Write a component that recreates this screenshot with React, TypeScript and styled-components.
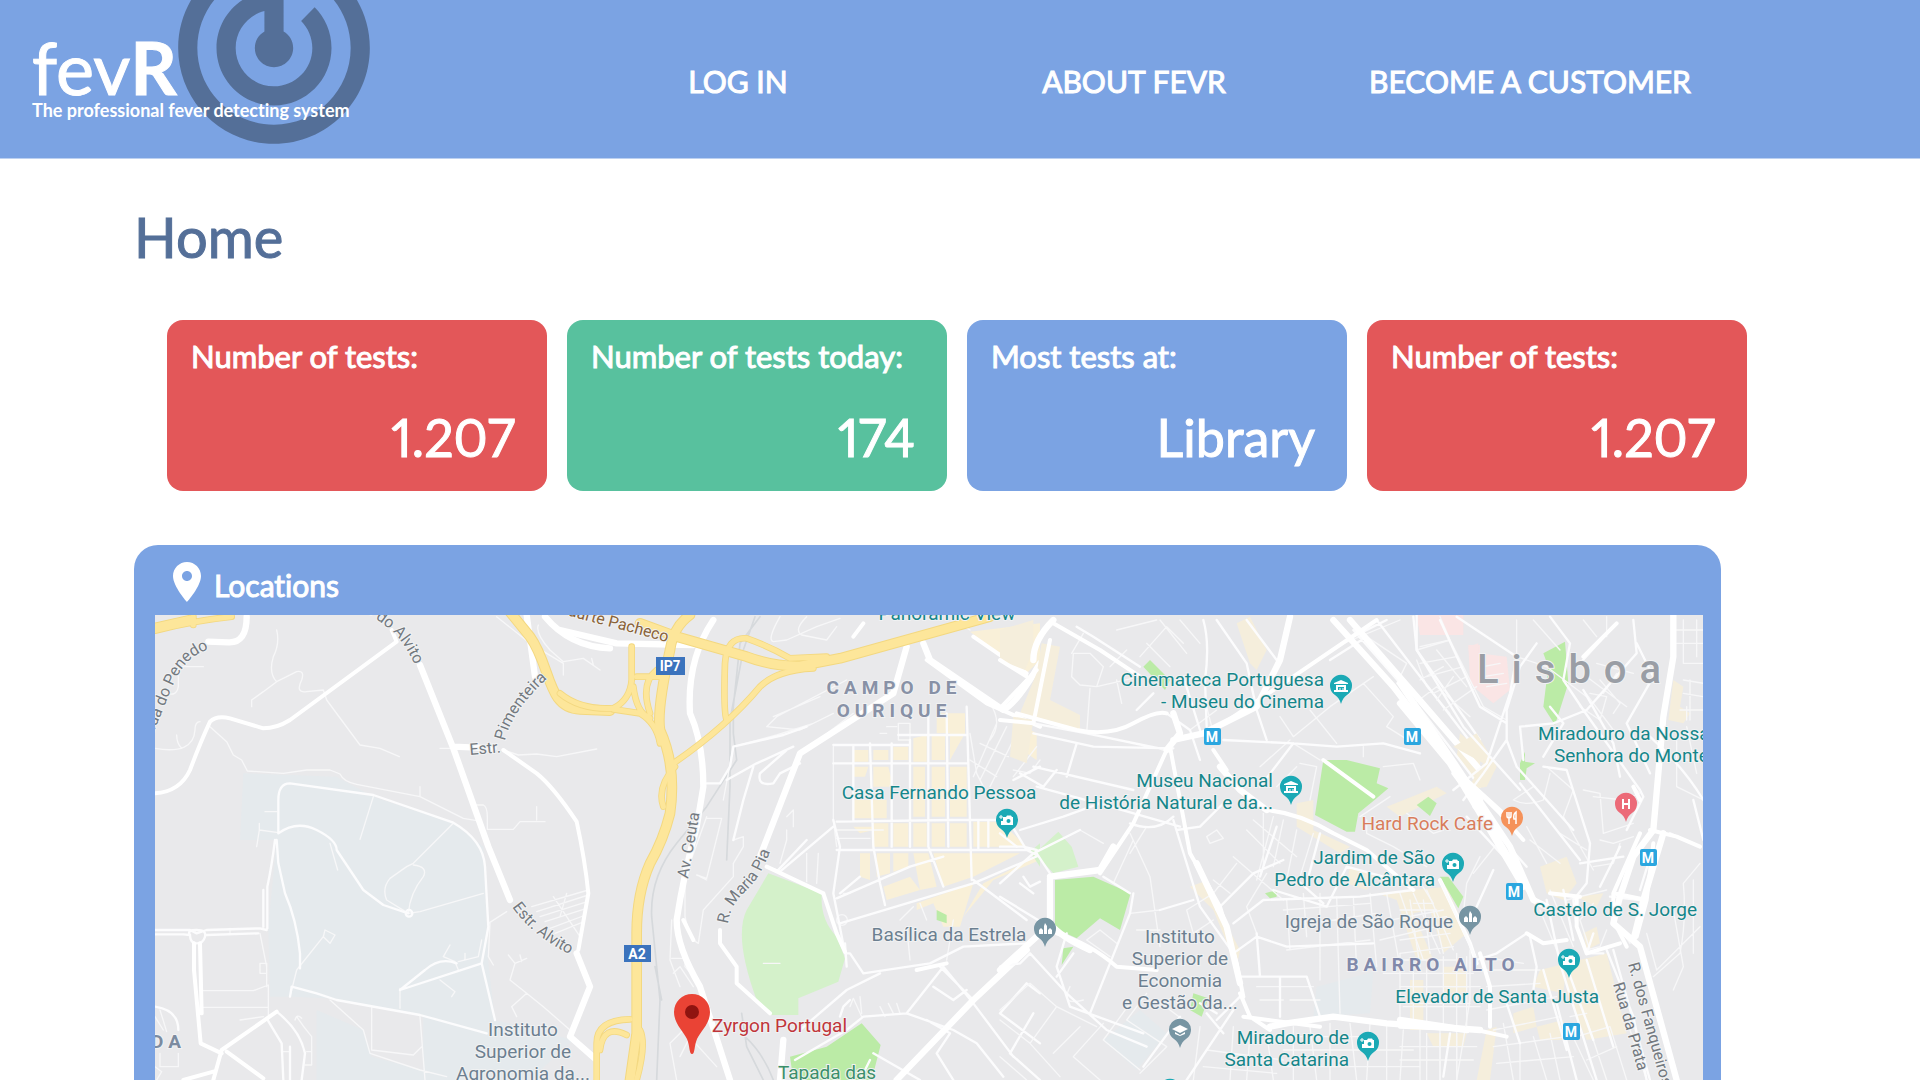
import React from "react";
import styled, { createGlobalStyle } from "styled-components";

const colors = {
  blue: "#7ba3e3",
  navy: "#546f98",
  red: "#e35759",
  green: "#58c19e",
  teal: "#15868a",
  slate: "#6c7f90",
};

const GlobalStyle = createGlobalStyle`
  *, *::before, *::after { box-sizing: border-box; }
  body {
    margin: 0;
    background: #fff;
    font-family: Lato, "Open Sans", sans-serif;
    font-variant-numeric: proportional-nums;
    font-variant-ligatures: none;
  }
  h1, h2, h3, p, dl, dt, dd { margin: 0; }
`;

/* ---------- header ---------- */

const Header = styled.header`
  display: flex;
  height: 159px;
  padding-right: 10%;
  overflow: hidden;
  background: ${colors.blue};
  border-bottom: 1px solid #bdd1f1;
`;

const Brand = styled.a`
  position: relative;
  flex: 0 0 540px;
  padding: 32px 0 0 32px;
  color: #fff;
  text-decoration: none;
`;

const Radar = styled.svg`
  position: absolute;
  left: 159px;
  top: -67px;
  width: 230px;
  height: 230px;
  fill: ${colors.navy};
`;

const BrandName = styled.span`
  position: relative;
  display: block;
  font-size: 72px;
  line-height: 70px;
  -webkit-text-stroke: 1px currentColor;
`;

const Tagline = styled.span`
  position: relative;
  display: block;
  font-size: 18px;
  line-height: 16px;
  font-weight: 700;
`;

const Nav = styled.nav`
  flex: 1;
  display: grid;
  grid-template-columns: repeat(3, 1fr);
  align-items: center;
  justify-items: center;
  padding-top: 4px;
`;

const NavLink = styled.a`
  color: #fff;
  font-size: 30px;
  line-height: 36px;
  -webkit-text-stroke: 1px currentColor;
  text-decoration: none;
  white-space: nowrap;
`;

/* ---------- content ---------- */

const Main = styled.main`
  padding: 44px 173px 0 134px;
`;

const Title = styled.h1`
  color: ${colors.navy};
  font-size: 56px;
  line-height: 68px;
  font-weight: 400;
  -webkit-text-stroke: 1px currentColor;
`;

const Cards = styled.dl`
  display: grid;
  grid-template-columns: repeat(4, 1fr);
  gap: 20px;
  padding-left: 33px;
  margin-top: 49px;
`;

const Card = styled.div<{ $tone: string }>`
  display: flex;
  flex-direction: column;
  justify-content: space-between;
  height: 171px;
  padding: 15px 32px 22px 24px;
  border-radius: 16px;
  color: #fff;
  background: ${(p) => p.$tone};
  -webkit-text-stroke: 1px currentColor;
`;

const CardLabel = styled.dt`
  font-size: 31px;
  line-height: 42px;
`;

const CardValue = styled.dd`
  font-size: 52px;
  line-height: 64px;
  text-align: right;
`;

const Panel = styled.section`
  margin: 54px 26px 0 0;
  padding: 0 18px 0 21px;
  border-radius: 24px 24px 0 0;
  background: ${colors.blue};
`;

const PanelHeader = styled.div`
  display: flex;
  align-items: center;
  height: 70px;
  padding: 4px 8px 0;
`;

const PlaceIcon = styled.svg`
  width: 48px;
  height: 48px;
  fill: #fff;
`;

const PanelTitle = styled.h2`
  padding: 6px 0 0 3px;
  color: #fff;
  font-size: 30px;
  line-height: 36px;
  font-weight: 400;
  -webkit-text-stroke: 1px currentColor;
`;

/* ---------- map ---------- */

const MapCanvas = styled.svg`
  display: block;
  width: 100%;
  background: #e9e9eb;
  font-family: Roboto, "Noto Sans", sans-serif;
`;

const Street = styled.path<{ $w: number; $color?: string }>`
  fill: none;
  stroke: ${(p) => p.$color ?? "#fff"};
  stroke-width: ${(p) => p.$w};
  stroke-linejoin: round;
  stroke-linecap: round;
`;

const Label = styled.text<{ $color: string; $anchor?: string }>`
  font-size: 19px;
  fill: ${(p) => p.$color};
  text-anchor: ${(p) => p.$anchor ?? "end"};
  stroke: #f1f2f3;
  stroke-width: 2px;
  paint-order: stroke;
`;

const District = styled(Label)`
  font-weight: 700;
  letter-spacing: 5px;
`;

const City = styled(Label)`
  font-size: 40px;
  font-weight: 500;
  letter-spacing: 13px;
`;

const RoadLabel = styled(Label)`
  font-size: 16px;
`;

const BadgeText = styled.text`
  font-size: 14px;
  font-weight: 700;
  fill: #fff;
  text-anchor: middle;
`;

type Sheet = {
  x: number;
  campus?: string;
  cream?: string;
  pink?: string;
  pale?: string;
  park?: string;
  rail?: string;
  thin: string;
  mid: string;
  wide: string;
  major: string;
  gold?: string;
  goldWide?: string;
};

/* The survey sheets are drawn at three units per map pixel. */
const sheets: Sheet[] = [
  {
    x: -25,
    campus:
      "M340 520L620 530L730 590L970 670L1060 740L1075 1090L1095 1260L1330 1320L1200 1440H880L880 1250L600 1195L480 1190L420 1190L415 980L440 720L330 720ZM560 1230L700 1290L725 1370L880 1410V1440H560Z",
    thin:
      "M440 90Q450 130 430 170Q415 220 440 245L500 215Q525 210 515 240Q495 280 530 275L580 270L590 300L690 435L750 445L808 470M440 245L400 275L365 300V320M145 200H220M145 200V260Q140 290 110 280M75 445Q190 465 195 390Q195 365 210 365M140 405Q140 430 155 445M240 380L290 425L310 465L335 480L352 513L460 520L530 510H600L630 522Q640 545 680 553L870 590L1000 655L1040 662M870 590V560M930 445H960M1120 450L1165 465L1220 462L1280 470L1400 447M1040 615H1060Q1072 620 1072 650V688H1150L1170 665H1245M1220 620V660M730 590L690 718M600 730L623 810M405 635H440M388 670V690L445 698M380 740L388 690M970 670L850 790L830 800L780 835Q755 865 770 900L835 940Q840 880 880 830Q895 800 850 795M835 940L870 935L1060 880M480 1190L500 1110L580 1010M585 990L615 1005L600 1030L580 1010L585 990M300 985V1000M390 1000L410 1100V1160M390 1090H410V1120H390ZM210 1172H370L415 1155V1245M220 1222H415M960 1035L940 1070L975 1085L985 1110M930 1140L975 1175L965 1190M1055 1020L1045 1070L985 1085M1005 1060V1080M810 1165V1225M870 1250L885 1440M725 1220V1350L850 1365L875 1340M600 1200L700 1290L720 1360L870 1410L950 1430M1135 1065L1155 1090L1140 1140L1190 1180L1145 1220L1160 1250M1190 1180L1240 1220L1320 1290M1155 1090L1190 1075M1170 1065L1175 1085M1075 970L1130 935M1080 970L1075 1070L1090 1095M1205 920L1375 870M1220 935L1375 885M1230 950L1372 905M1245 965L1370 925M1260 985L1367 945M1275 1000L1362 965M1270 890L1350 1010M1310 880L1290 950M1100 50L1200 130L1300 190V225M1225 75Q1215 100 1260 150L1300 185L1360 175L1410 210M1385 175L1390 195M500 1250Q520 1280 545 1310V1395H525M495 1260Q500 1240 515 1255M530 1355H545M460 1355H480M90 1230L110 1295M75 1250L100 1290M90 1360V1400H145V1360M75 1400L95 1415L80 1440M400 1250L330 1260",
    mid:
      "M445 700V600Q445 550 480 550L730 585L970 668Q1060 720 1065 800L1075 980L1055 1090L1095 1260M445 700Q500 660 560 690T620 750L700 870L760 915L835 940M440 720L445 790L465 880Q500 960 510 1060V1105M435 720Q425 800 412 860V985M400 870V980M410 1255L455 1330L460 1440M440 1235Q510 1290 525 1360L515 1440M485 1160L480 1190M485 1160L560 1180L620 1200L870 1245L1070 1300M810 1170L885 1110Q930 1070 980 1090M810 1170L1055 1090M75 990H180L200 1000L230 990L390 985L410 990M75 1003H160L180 1005M230 1005L385 1000M75 1220Q145 1230 145 1290M480 1340V1440M180 1005Q180 1030 200 1030T225 1010T200 990T180 1005M827 940A10 10 0 1 0 847 940A10 10 0 1 0 827 940",
    wide:
      "M75 580Q150 575 180 510Q210 430 240 365Q260 345 300 355L400 385Q440 385 480 360L800 125L785 90M1120 450L1220 520Q1270 560 1340 665Q1365 780 1375 880L1345 1050M192 1030V1110L212 1330L275 1360M210 1030L215 1240M440 1235L275 1350L250 1440M160 1440L250 1415M290 1355L400 1435",
    major:
      "M350 50Q350 130 295 127L235 125M1190 45L1215 230M1245 50Q1320 140 1440 145M870 195L970 445L1075 740L1140 900M970 440L1090 445M1340 1060L1380 1160L1320 1310L1400 1380V1440",
    gold:
      "M75 78L190 52M75 92Q190 62 305 50M190 50V75",
    goldWide: "M1135 30L1200 110C1265 200 1250 325 1350 328L1440 332",
  },
  {
    x: 405,
    cream:
      "M1230 95L1440 70V180L1400 220ZM880 450H925V485H880ZM940 450H985V480H940ZM1000 440H1045V480H1000ZM1060 415L1100 405V485H1060ZM1115 405H1155V480H1115ZM1130 340H1215V400L1170 480V400H1130ZM880 500H925L915 530H880ZM940 500H985L1000 560H940ZM1060 500H1095V650H1060ZM1115 500H1155V650H1115ZM1170 500H1220V650H1170ZM880 600H980V655H880ZM880 680H980L900 700ZM940 670H985V740H940ZM1000 670H1045V740H1000ZM1060 670H1100V740H1060ZM1115 670H1155V740H1115ZM1170 670H1220V740H1170ZM1240 665H1320L1400 740H1240ZM900 760H930V840L900 830ZM950 760H990V820L950 830ZM1000 760H1045V800L1000 815ZM1060 760H1105L1130 860L1080 870ZM1120 760H1380L1240 830L1150 860ZM970 860L1050 830L1080 870L980 900ZM1070 910L1240 850L1200 980H1150L1120 910L1070 930ZM1270 850L1440 765V780L1300 840L1210 950ZM1370 370L1430 400V480L1370 440Z",
    pale:
      "M625 820L785 880Q780 960 830 1010L855 1075L835 1145L715 1195V1245H635L590 1200Q520 1010 560 930ZM1410 755L1440 730V800Z",
    park:
      "M690 1370L800 1340L905 1270L962 1335L935 1440H700ZM1130 930L1160 945V970L1130 960Z",
    rail:
      "M600 50L540 130L520 320V400L530 480M585 50L550 150L510 360V560L500 780M530 480L440 620L350 730Q270 830 275 950L300 1200L290 1440M285 1100L305 1200M545 1240L560 1340L610 1440M555 1310Q610 1360 640 1440",
    thin:
      "M660 50Q620 120 640 125L680 120L770 80L840 55M740 50Q700 90 725 105L800 120L830 80M620 380L720 390L820 340M640 350L780 290M620 380L650 350L860 240M520 440L650 405L760 370M880 340L750 440M440 655L485 655L440 835L410 825M440 840L420 830M520 720L550 710V740L520 790V830L430 930L415 1030Q390 1020 375 950V830L440 650M490 600L520 440M335 960L330 1080L360 1160M335 1075H375V1100L400 1130M340 1120L360 1100L400 1160M330 1330L370 1290L470 1400M330 1330L350 1440M400 1290L360 1370M820 440V660L830 740M1015 370V420H1050V370ZM980 380H1010M960 400H980M1230 400L1250 520L1270 560M1310 370L1240 530M1340 380L1260 540M1370 400L1290 560M1230 480L1310 530M1260 430L1345 470M1360 510L1410 520L1440 480M1430 440L1360 530M830 690L970 690M830 715H930M740 845V760M770 850L775 760M680 690V720L660 790M700 680V630L680 650M870 1220L880 1195L905 1250M905 1240L900 1190M960 1220L975 1250M985 1210L1000 1240M1010 1210L1020 1240M1290 310Q1330 370 1290 420M610 1090H660M830 960A16 16 0 1 0 862 960A16 16 0 1 0 830 960M850 880H870M1080 910L1100 960M1020 960L1060 920M1040 980L1050 1080M1160 1080L1180 960M1230 90L1180 60",
    mid:
      "M520 440L670 405L740 380M680 450L600 520Q590 560 640 550L660 520L720 490M500 540L590 490L700 440M580 500L550 600L520 720M440 550H480L510 500L520 440M620 800L660 815L820 680M650 815L740 720M820 435H1050M880 440V660M930 430L940 740L960 850L975 915M995 430V740M1050 420V740M1105 340V740L1150 860M1160 340L1165 740M1220 320L1235 840M820 490H1220M830 665L1180 660H1320M1255 660V745M1285 660V740M830 750H1410M1015 405H1220M820 660L840 740L820 880M830 895L1050 800L1150 770M840 970L1240 850L1440 765M820 880L855 1060H870L910 1120L1110 1090L1210 1040L1400 1030M860 1100L855 1030M1240 840L1400 960M1320 700L1370 740M1345 660L1400 750L1440 770M1390 830L1410 860L1440 845M840 1250L850 1220L870 1200M705 1380L860 1290L910 1250L1040 1240L1150 1100L1240 1210L1360 1370M1040 1240L1180 1290L1250 1330L1330 1430M1100 1260L1170 1300L1130 1360L1180 1440M1120 1160L1180 1200L1220 1170M1140 1100L1240 1200M940 1360L1080 1440M930 1380L900 1440M1320 1240L1400 1150L1440 1180M1320 1240L1440 1330M1420 1240L1350 1360L1440 1440M720 1290L860 1170L960 1120M1360 540L1440 500M900 830L840 880",
    wide:
      "M480 990V1030L530 1100V1150L630 1240M790 880L830 1000L855 1055M620 800L790 880M1100 180L1280 310L1440 380M1160 1090L1070 1110M880 110L910 70M1240 110L1400 220M370 960L400 1020",
    major:
      "M460 60Q380 180 390 340Q430 430 430 560L410 680Q370 830 350 960Q350 1040 420 1160L510 1440M1040 140L1000 280L720 460L600 770M660 1440L670 1320M400 135L170 130L0 90M1440 190Q1370 310 1330 330L1110 180L1090 130M1400 1050L1240 1200L1010 1440",
    gold:
      "M215 140V240Q210 300 160 325Q60 330 0 280M160 328L240 340Q290 370 300 430M230 230H300M220 260Q230 340 270 355M290 210Q240 250 270 340M340 490Q500 380 600 260Q650 210 760 205M500 360Q490 340 495 190Q500 110 560 115Q630 140 690 175L800 170M345 500Q290 560 310 620M210 1258Q110 1260 110 1330V1440M200 1305Q130 1270 120 1350M240 1290Q260 1330 230 1440",
    goldWide:
      "M390 45Q340 80 330 150Q290 330 300 390Q350 500 330 640Q310 720 270 790Q230 880 230 1000V1300L210 1440M240 70L350 110L560 170Q640 200 720 198L840 175L1290 50",
  },
  {
    x: 845,
    cream:
      "M0 90L100 60L100 150L75 210L0 180ZM125 130L180 140L150 300L240 345V390L60 340L110 220ZM40 350L100 360L80 490L30 470ZM710 70L750 50L800 150L770 210L750 190ZM890 610L940 600V690L1050 740L1020 760L890 680ZM1160 620L1310 560L1340 580L1200 650ZM570 860L610 845L720 1050L710 1100L640 930ZM1050 800L1130 830L1100 870L1040 850ZM1130 880L1340 860L1400 1000L1330 1060L1290 930L1240 940L1300 1080H1250L1190 900ZM1380 400L1440 450V560L1370 470ZM1230 1140H1270V1290H1230ZM1330 1100H1400V1180H1330ZM1280 1300H1400L1390 1340H1300Z",
    pink: "M1250 45H1390V105H1260ZM1405 135H1440V270L1410 250Z",
    campus: "M950 1160L1120 1115L1110 1240L940 1250ZM310 1320L420 1230L500 1300L410 1410Z",
    pale: "M175 695L215 740L235 800L160 820L105 760Z",
    park:
      "M165 840L280 830L392 880L360 990L300 955L230 1015L165 985ZM430 200L450 180L510 240L495 270ZM970 480H1040L1140 505L1130 550L1165 565L1130 595L1075 640L1065 695H1040L945 645ZM1250 615L1285 590L1310 610L1290 648ZM1320 830L1345 830L1390 890L1375 925ZM190 1045L220 1040L185 1095ZM580 1180L625 1195L605 1250L570 1230ZM795 880L830 870V890L810 895Z",
    thin:
      "M220 160H270L310 200L290 260L240 255L215 230ZM215 160L250 100M290 260L420 230M350 240L365 310M380 150L330 200M270 265L260 400M420 170L500 80L550 130M440 130L510 200M480 60L560 160M350 90L470 60M540 60L600 130M570 390L650 330M620 320L640 400M770 330L800 420M840 350L880 410L990 320L1120 230M930 330L1010 430M1090 250L1180 350L1160 380L1240 430M870 420L780 500M880 430L960 480M1030 130L1200 60M1100 110L1220 190L1190 250M1250 150L1350 120L1320 60M1250 180L1280 260L1350 340M1310 150L1400 260M1330 200L1260 240M1230 320L1310 260L1410 350M890 500L830 560M900 490L950 500L930 600M1090 440V470M1150 500L1240 490L1260 540M1080 650L1170 590M1100 660V700L1180 740L1280 800M1220 640L1300 700L1330 690M620 710L650 690L670 715L630 730ZM740 690L840 790M760 660L890 770M700 770L850 900M790 640V800M820 650L770 840M850 660L820 800M890 690L860 840M940 700L900 830M710 790L640 880M640 840L690 880M390 700L450 830L480 1040M400 720L340 850M310 730L240 690M480 930L390 940M480 990L410 990M800 820L740 920L770 1000M860 900L870 1050M910 880L920 1010M960 880V1140M1010 890L1020 1240M1060 890L1070 1110M1110 880L1130 1100M1160 880L1200 1100M1200 880L1270 1080M1240 880L1320 1060M1280 870L1360 1050M850 930L1110 910M870 980L1130 940M860 1050L1110 1020M1120 970L1330 930M1140 1020L1350 970M1180 1080H1390M1150 1120H1420M1220 1160H1440M1210 1220H1440M1200 1060V1260M1240 1080V1280M1280 1080V1280M1330 1070V1280M1370 1060V1290M1400 1070V1280M330 1070L260 1020L300 990L350 1030M210 1160Q180 1220 250 1200M0 1230L90 1150L170 1220L90 1330L0 1260M170 1220L290 1280M90 1330L180 1430M0 1370L80 1440M240 1280L160 1360M310 1270L220 1370L300 1440M390 1210L310 1320L420 1410M440 1180L380 1260L500 1340L420 1420M470 1200L550 1260M600 1280L580 1440M700 1280L690 1440M750 1300L740 1440M800 1300L820 1440M880 1280V1440M930 1280L950 1440M990 1270V1440M1050 1270L1070 1440M1110 1270L1100 1440M1160 1280V1440M1210 1290L1200 1440M1260 1290V1440M1320 1290V1440M1370 1290V1440M620 1350L850 1380M610 1400L830 1420M850 1350H1240M850 1400H1260M870 1310H1100M870 1200H960M780 1200H850M770 1160H940M390 760L440 680M640 960L580 1000L560 930L640 880",
    mid:
      "M230 80L280 110L420 200M500 340L570 390L600 480M410 330L460 280M610 60Q630 130 615 240L620 380M650 60L740 190M550 230L600 390M670 420L880 430L1010 440L1150 430L1260 460M740 190L770 330L800 420M740 60L830 180M880 430L780 560M100 370L260 400L500 450M100 400L280 440L520 445M100 500L400 570M200 530L230 430M60 520L130 560L170 510M110 560L330 620L540 680M390 670Q470 700 520 650M60 690L190 650L300 610M530 690L600 680L680 600M240 690L100 760L0 850M110 760L150 820M0 740H70L110 750M60 850L100 880M0 890L130 970M400 880L390 940L270 1240M390 880L310 830M200 1000L170 1100L210 1220L430 1300M170 1130L220 1060M520 660L600 920L700 1060M650 930L760 820L850 780M700 970L790 900L1080 890L1240 870M700 1060L770 1010L860 1040L1120 1030M720 1130H920L960 1250M770 1000L780 1130M840 1130V1250M580 900L480 930M820 870L980 920L1040 800L1150 830M880 830L970 910M830 680L780 830M960 700L920 850M1060 90L1210 260L1440 560M1130 60L1430 450M1240 50L1250 150L1440 420M1100 110L990 180M1160 60L1060 110M600 1210L650 1240M620 1240L670 1300M540 1250L430 1400M650 1260L720 1190M700 1230L560 1440M0 1100L60 1090L90 1060L200 1180L320 1290L440 1340",
    wide:
      "M0 325L110 210M0 180L80 230M50 340L230 390Q330 410 400 370T500 340M0 360L100 370L150 120M160 70L300 150L420 230M500 450L400 670L300 820M510 440L570 760L660 920L710 1090L730 1190M640 450L680 510M800 630Q900 640 1000 700L1100 750L1240 870M720 1180L750 1250L810 1290M170 1000Q270 1030 350 1100L470 1110M730 1250L960 1280M1130 60L850 250L670 370M970 480L1120 590M1320 840L1410 1030L1430 1090",
    major:
      "M100 180Q100 120 160 60M520 340L540 400L500 450M520 420L610 400L770 320L840 180L870 50M660 500L720 570L800 630M150 830L300 810L340 740M150 835V970Q180 1010 270 1050M0 1110L110 1010M1000 60L1180 260L1440 600M1050 60L1250 290L1440 510M590 790L680 980L720 1150M810 1280L860 1270L1000 1250L1160 1270L1440 1290",
  },
  {
    x: 1245,
    cream:
      "M820 240L850 260L840 320L870 340L850 370L805 360ZM160 440L230 400L290 500L260 560L200 570L250 490ZM420 800L500 770L530 850L490 900L440 880ZM530 890L610 880L590 920ZM550 1000L590 980L600 1030L560 1050ZM420 1110L500 1090L490 1180L400 1160ZM500 1090L620 1060L680 1300L560 1320L500 1180ZM340 1240L400 1220L410 1280L340 1300ZM410 1280L490 1260L500 1320H420ZM260 1290L290 1280L270 1440H230Z",
    pink: "M50 45H180V100H60ZM205 140L235 130V160L320 170L330 270L280 310L220 260Z",
    park:
      "M495 125L505 250L465 375L430 320L445 200L430 160ZM360 490L375 455V485L405 490L380 505L375 540H360Z",
    thin:
      "M60 140L150 120L120 50M60 190L170 170M80 230L190 200M100 280L200 230M130 330L230 260M150 120L250 320L320 360M160 230L110 300M250 200L300 190M250 230L310 220M260 260L320 250M350 60V170L440 200L560 290M400 60L480 150M550 60L590 110M620 50V110M560 230L680 320M550 270L640 390M590 190L700 220M540 320L600 360L620 290L570 280M600 240L660 310M650 220L610 280M640 340L660 310M850 60V190H910M890 60V170M830 90H910M830 130H910M850 240L910 250M850 280L910 290M840 330H910M860 320V360M870 360V240M440 500L520 570L490 650L580 810M450 520L430 600Q380 620 340 600L400 560M550 570L600 580L610 700L700 670M580 590L670 600L720 580L700 560M600 720L640 730L700 710M580 800L640 790L660 730M480 700L560 750M240 770L200 850L190 940M300 720L220 820M380 680L440 790M390 720L480 790M420 930L470 1050M450 870L520 1040M500 900L620 870M580 910L540 960L570 1050M560 1050L600 1040L620 990M670 1000L690 1030M740 1000L770 1110L900 980M760 1130L840 1060Q860 960 850 850L900 790M820 930L850 1100L820 1170M880 840V1060M830 420V560L910 600M860 380L890 520M910 480H800M50 830L100 910H40M0 930L110 930M0 970L140 950M0 1020L150 1000M0 1060L160 1040M30 900L60 1100M70 900L90 1060M100 930L130 1060M210 1050V1200L170 1440M240 1070L370 1090M220 1110H420M260 1160L420 1150M260 1230L470 1190M280 1290L480 1250M360 1330V1440M310 1270L340 1440M280 1340L500 1310M290 1390L520 1370M400 1310L440 1440M450 1300L480 1440M500 1270L580 1440M560 1260L620 1440M630 1280L680 1440M680 1260L740 1440M510 1250L560 1240M530 1310L630 1280M560 1380L650 1340M0 1340H230M0 1380H220M80 1300V1440M120 1300V1440M170 1300V1440M0 1160H210M0 1210H210",
    mid:
      "M50 40V150L190 380L360 570M120 60L240 320L320 370M170 50L350 170L330 280L260 490L160 570M410 130L360 200L320 330V420L350 500L520 690M450 50L510 130L490 240L550 330L720 570L730 590L680 690M650 70L540 190M700 60L710 160L560 330L460 370L360 380L370 480M710 130L760 230L680 370L750 520M550 270L640 430L660 530M320 420L250 520L190 600M430 500L500 510L570 730L560 850L520 900L530 980M450 320L490 370L430 470M580 1000L560 1060H610M360 550L540 780M200 650L330 790M220 620L380 800M280 810L230 920M490 870L520 1020M440 900L480 1090L590 1440M540 790L670 770M810 700L900 740M760 740L720 870M720 900L630 890M660 740L600 860M880 600L910 720M750 410Q850 500 910 600M120 840L230 1080L290 1060L380 1000M390 1010L410 1100L400 1170M430 1110L500 1350M500 1100L580 1320M560 1080L640 1340M380 870L430 920M620 1050L700 1250L740 1440M640 1050L750 1440M130 1430L150 1300M320 1210L360 1330M470 1210L530 1440",
    wide:
      "M80 400L200 540L310 640M200 540L300 640L370 720M160 520L250 640L370 840M650 70L550 170M700 560L720 600M720 700L640 880V960L680 1040M760 730L740 900L710 1010M640 880L740 900M450 880L540 890M530 890V980L560 1060M240 1060L270 1160V1280M0 1280L230 1290L320 1310M380 1000L430 1030L500 1020M560 1060L660 1030M900 740L830 710L750 690",
    major:
      "M820 45V170L790 350L760 690M0 250L170 500L330 740L400 900L440 920M0 310L150 490L270 690L370 860M760 690L700 770L660 890L640 970L720 1040L830 1440M790 700L730 900L700 1020M0 1260L200 1290",
  },
];

const Tile = (s: Sheet) => (
  <g transform={`translate(${s.x} -15) scale(${1 / 3})`}>
    {s.campus && <path d={s.campus} fill="#e5eaed" />}
    {s.cream && <path d={s.cream} fill={s.x > 800 ? "#f5eedc" : "#f9f0d8"} />}
    {s.pink && <path d={s.pink} fill="#fae5e5" />}
    {s.pale && <path d={s.pale} fill="#d4f1ca" />}
    {s.park && <path d={s.park} fill="#bbeba6" />}
    {s.rail && <Street d={s.rail} $w={5} $color="#d6d9dc" />}
    <Street d={s.thin} $w={4} $color="#f7f7f8" />
    <Street d={s.mid} $w={7} $color="#fcfcfd" />
    <Street d={s.wide} $w={12} />
    <Street d={s.major} $w={19} />
    {s.gold && <Street d={s.gold} $w={20} $color="#f3d880" />}
    {s.goldWide && <Street d={s.goldWide} $w={32} $color="#f3d880" />}
    {s.gold && <Street d={s.gold} $w={15} $color="#fde69a" />}
    {s.goldWide && <Street d={s.goldWide} $w={26} $color="#fde69a" />}
  </g>
);

type Place = { lines: string[]; x: number; y: number; color: string; anchor?: string };

const places: Place[] = [
  { lines: ["Panoramic View"], x: 792, y: 5, color: colors.teal, anchor: "middle" },
  { lines: ["Casa Fernando Pessoa"], x: 784, y: 184, color: colors.teal, anchor: "middle" },
  { lines: ["Basílica da Estrela"], x: 794, y: 326, color: colors.slate, anchor: "middle" },
  { lines: ["Zyrgon Portugal"], x: 557, y: 417, color: "#c0353a", anchor: "start" },
  { lines: ["Tapada das"], x: 672, y: 464, color: "#3b8f6a", anchor: "middle" },
  { lines: ["Cinemateca Portuguesa", "- Museu do Cinema"], x: 1169, y: 71, color: colors.teal },
  { lines: ["Museu Nacional", "de História Natural e da..."], x: 1118, y: 172, color: colors.teal },
  { lines: ["Hard Rock Cafe"], x: 1338, y: 215, color: "#d97d5c" },
  { lines: ["Jardim de São", "Pedro de Alcântara"], x: 1280, y: 249, color: colors.teal },
  { lines: ["Igreja de São Roque"], x: 1298, y: 313, color: colors.slate },
  { lines: ["Elevador de Santa Justa"], x: 1444, y: 388, color: colors.teal },
  { lines: ["Castelo de S. Jorge"], x: 1542, y: 301, color: colors.teal },
  { lines: ["Miradouro da Nossa"], x: 1383, y: 125, color: colors.teal, anchor: "start" },
  { lines: ["Senhora do Monte"], x: 1399, y: 147, color: colors.teal, anchor: "start" },
  { lines: ["Instituto", "Superior de", "Economia", "e Gestão da..."], x: 1025, y: 328, color: colors.slate, anchor: "middle" },
  { lines: ["Miradouro de", "Santa Catarina"], x: 1194, y: 429, color: colors.teal },
  { lines: ["Instituto", "Superior de", "Agronomia da..."], x: 368, y: 421, color: colors.slate, anchor: "middle" },
];

const roads = [
  { id: "penedo", text: "Estrada do Penedo", d: "M-25 190L0 114C12 87 18 64 30 50Q38 40 54 34", end: true },
  { id: "alvito-n", text: "Estr. do Alvito", d: "M160 -40L205 -8L232 12Q245 20 260 50", end: true },
  { id: "pimenteira-w", text: "Estr.", d: "M315 140L350 137" },
  { id: "pimenteira-n", text: "Pimenteira", d: "M350 126Q356 96 396 60" },
  { id: "alvito-s", text: "Estr. Alvito", d: "M357 292Q378 322 420 342" },
  { id: "pacheco", text: "Av. Eng. Duarte Pacheco", d: "M330 -24L415 1L512 27", end: true, color: "#8a6238" },
  { id: "ceuta", text: "Av. Ceuta", d: "M533 264L546 190" },
  { id: "pia", text: "R. Maria Pia", d: "M573 309Q575 290 592 275Q606 262 616 234" },
  { id: "fanqueiros", text: "R. dos Fanqueiros", d: "M1473 349L1513 493" },
  { id: "prata", text: "Rua da Prata", d: "M1458 369L1490 480" },
];

const metros = [
  [1049, 113],
  [1249, 113],
  [1351, 268],
  [1485, 234],
  [1408, 408],
];

const glyphs: Record<string, React.ReactNode> = {
  camera: (
    <>
      <path d="M-4-3H-1L0-4.500H4L5-3H6V5H-6V1H-4Z" fill="#fff" />
      <circle cx="1.500" cy="1" r="2" fill="#1ba9b5" />
      <path d="M-6-5V-1M-8-3H-4" stroke="#fff" />
    </>
  ),
  museum: (
    <>
      <path d="M0-6L7-3V-2H-7V-3ZM-7 4H7V6H-7ZM-5-1H5V4H3V1H-3V4H-5Z" fill="#fff" />
      <path d="M-1 2V4M2 2V4" stroke="#fff" />
    </>
  ),
  church: <path d="M-6 5V1L-4-1L-2 1V5ZM-1 5V-3L0-6L2-3V5ZM3 5V1L5-1L7 1V5Z" fill="#fff" />,
  school: <path d="M0-5L8-1L0 3L-8-1ZM-5 2L0 5L5 2V4L0 6L-5 4ZM7-1V4" fill="#fff" />,
  food: <path d="M-5-6V-2Q-5 0-3 0V6M-1-6V-2Q-1 0-3 0V-6M4 6V-6Q1-4 2 1H4" fill="none" stroke="#fff" strokeWidth="1.500" />,
  hospital: <path d="M-3-5V5M3-5V5M-3 0H3" stroke="#fff" strokeWidth="2" />,
};

const pins: [number, number, string, string][] = [
  [852, 205, "#1ba9b5", "camera"],
  [1186, 71, "#1ba9b5", "museum"],
  [1136, 172, "#1ba9b5", "museum"],
  [1357, 203, "#f5925a", "food"],
  [1471, 189, "#ec6a78", "hospital"],
  [1298, 249, "#1ba9b5", "camera"],
  [1315, 302, "#7795a3", "church"],
  [890, 314, "#7795a3", "church"],
  [1025, 415, "#7795a3", "school"],
  [1213, 428, "#1ba9b5", "camera"],
  [1414, 345, "#1ba9b5", "camera"],
  [1015, 475, "#1ba9b5", "camera"],
];

const LocationsMap = () => (
  <MapCanvas viewBox="0 0 1548 465" role="img" aria-label="Map of Lisboa">
    {sheets.map((s) => (
      <Tile key={s.x} {...s} />
    ))}

    {roads.map((r) => (
      <React.Fragment key={r.id}>
        <path id={r.id} d={r.d} fill="none" />
        <RoadLabel $color={r.color ?? "#73797f"} $anchor={r.end ? "end" : "start"}>
          <textPath href={`#${r.id}`} startOffset={r.end ? "100%" : "0"}>
            {r.text}
          </textPath>
        </RoadLabel>
      </React.Fragment>
    ))}

    <City x={1322} y={68} $color="#9a9ea5" $anchor="start">Lisboa</City>
    <District x={739} y={79} $color="#8891a6" $anchor="middle">CAMPO DE</District>
    <District x={739} y={102} $color="#8891a6" $anchor="middle">OURIQUE</District>
    <District x={1278} y={356} $color="#8189aa" $anchor="middle">BAIRRO ALTO</District>
    <District x={-4} y={433} $color="#7c8ba0" $anchor="start">DA</District>

    {places.map((p) => (
      <Label key={p.lines.join()} y={p.y} $color={p.color} $anchor={p.anchor}>
        {p.lines.map((line, i) => (
          <tspan key={line} x={p.x} dy={i ? 22 : 0}>
            {line}
          </tspan>
        ))}
      </Label>
    ))}

    <rect x="501" y="42" width="29" height="18" fill="#3b73bd" />
    <BadgeText x={515} y={56}>IP7</BadgeText>
    <rect x="469" y="330" width="27" height="17" fill="#3b73bd" />
    <BadgeText x={482} y={344}>A2</BadgeText>

    {metros.map(([x, y]) => (
      <g key={`${x}-${y}`}>
        <rect x={x} y={y} width="17" height="17" rx="2" fill="#2ba6df" />
        <BadgeText x={x + 8} y={y + 14}>M</BadgeText>
      </g>
    ))}

    {pins.map(([x, y, color, glyph]) => (
      <g key={`${x}-${y}`} transform={`translate(${x} ${y})`}>
        <path d="M0 18C-1 14-3 11-6 9A11 11 0 1 1 6 9C3 11 1 14 0 18Z" fill={color} />
        {glyphs[glyph]}
      </g>
    ))}

    <g transform="translate(537 397)">
      <path d="M0 42C-3 42-2 34-5 27C-8 20-18 12-18 0A18 18 0 1 1 18 0C18 12 8 20 5 27C2 34 3 42 0 42Z" fill="#ea4335" />
      <circle r="7" fill="#8f1410" />
    </g>
  </MapCanvas>
);

const stats = [
  { id: "total", label: "Number of tests:", value: "1.207", tone: colors.red },
  { id: "today", label: "Number of tests today:", value: "174", tone: colors.green },
  { id: "top", label: "Most tests at:", value: "Library", tone: colors.blue },
  { id: "total-2", label: "Number of tests:", value: "1.207", tone: colors.red },
];

export default function App() {
  return (
    <>
      <GlobalStyle />
      <Header>
        <Brand href="#home">
          <Radar viewBox="0 0 24 24" aria-hidden="true">
            <path d="M19.070 4.930l-1.410 1.410C19.100 7.790 20 9.790 20 12c0 4.420-3.580 8-8 8s-8-3.580-8-8c0-4.080 3.050-7.440 7-7.930v2.020C8.160 6.570 6 9.030 6 12c0 3.310 2.690 6 6 6s6-2.690 6-6c0-1.660-.67-3.160-1.760-4.240l-1.410 1.410C15.550 9.900 16 10.900 16 12c0 2.210-1.790 4-4 4s-4-1.790-4-4c0-1.860 1.280-3.410 3-3.860v2.140c-.6.350-1 .980-1 1.720 0 1.100.9 2 2 2s2-.9 2-2c0-.74-.4-1.380-1-1.720V2h-1C6.480 2 2 6.480 2 12s4.480 10 10 10 10-4.480 10-10c0-2.760-1.120-5.260-2.930-7.070z" />
          </Radar>
          <BrandName>
            fev<b>R</b>
          </BrandName>
          <Tagline>The professional fever detecting system</Tagline>
        </Brand>
        <Nav>
          <NavLink href="#login">LOG IN</NavLink>
          <NavLink href="#about">ABOUT FEVR</NavLink>
          <NavLink href="#customer">BECOME A CUSTOMER</NavLink>
        </Nav>
      </Header>
      <Main>
        <Title>Home</Title>
        <Cards>
          {stats.map((s) => (
            <Card key={s.id} $tone={s.tone}>
              <CardLabel>{s.label}</CardLabel>
              <CardValue>{s.value}</CardValue>
            </Card>
          ))}
        </Cards>
        <Panel>
          <PanelHeader>
            <PlaceIcon viewBox="0 0 24 24" aria-hidden="true">
              <path d="M12 2C8.130 2 5 5.130 5 9c0 5.250 7 13 7 13s7-7.750 7-13c0-3.870-3.130-7-7-7zm0 9.500c-1.380 0-2.500-1.120-2.500-2.500s1.120-2.500 2.500-2.500 2.500 1.120 2.500 2.500-1.120 2.500-2.500 2.500z" />
            </PlaceIcon>
            <PanelTitle>Locations</PanelTitle>
          </PanelHeader>
          <LocationsMap />
        </Panel>
      </Main>
    </>
  );
}
